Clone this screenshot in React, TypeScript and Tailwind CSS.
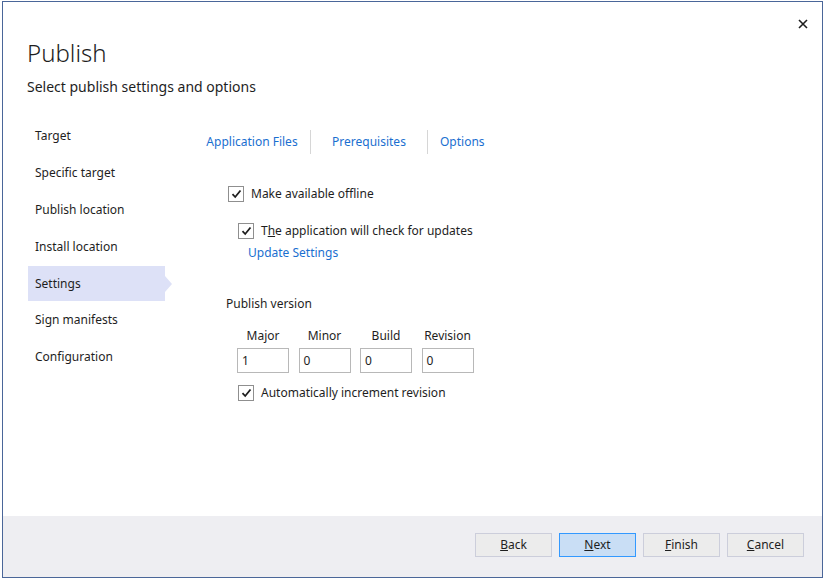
import React from 'react';

const navItems = [
  'Target',
  'Specific target',
  'Publish location',
  'Install location',
  'Settings',
  'Sign manifests',
  'Configuration',
];

const versionParts = [
  { label: 'Major', value: '1' },
  { label: 'Minor', value: '0' },
  { label: 'Build', value: '0' },
  { label: 'Revision', value: '0' },
];

const CheckBox: React.FC = () => (
  <span className="flex h-[16px] w-[16px] shrink-0 items-center justify-center border border-[#8f8f8f] bg-white">
    <svg width="11" height="10" viewBox="0 0 11 10">
      <path d="M1.5 5.2 L4.2 8 L9.5 1.5" fill="none" stroke="#1e1e1e" strokeWidth="1.8" />
    </svg>
  </span>
);

const DialogButton: React.FC<{ accel: string; rest: string; primary?: boolean }> = ({ accel, rest, primary }) => (
  <button
    className={`h-[24px] w-[77px] border text-[12px] text-[#1e1e1e] ${
      primary ? 'border-[#3399ff] bg-[#c9def5]' : 'border-[#cccedb] bg-[#ececec]'
    }`}
  >
    <u>{accel}</u>
    {rest}
  </button>
);

export default function App() {
  return (
    <div className="h-[581px] w-[826px] bg-white pl-[2px] pt-[1px] font-['Noto_Sans',sans-serif] text-[#1e1e1e]">
      <div className="relative flex h-[577px] w-[821px] flex-col border border-[#4a6699]">
        {/* close */}
        <button className="absolute right-[13px] top-[16px] flex h-[12px] w-[12px] items-center justify-center">
          <svg width="10" height="10" viewBox="0 0 10 10">
            <path d="M1 1 L9 9 M9 1 L1 9" stroke="#1e1e1e" strokeWidth="1.6" />
          </svg>
        </button>

        <div className="flex-1">
          <div className="pl-[24px] pt-[35px]">
            <h1 className="h-[32px] text-[24px] leading-[32px] font-light">Publish</h1>
            <p className="mt-[8px] h-[20px] text-[14px] leading-[20px]">Select publish settings and options</p>
          </div>

          <div className="mt-[21px] flex">
            {/* sidebar */}
            <ul className="ml-[25px] w-[144px]">
              {navItems.map((item) => {
                const active = item === 'Settings';
                return (
                  <li key={item} className="relative flex h-[36.8px] items-center">
                    <div
                      className={`flex h-[35px] w-[137px] items-center pl-[7px] text-[12px] ${
                        active ? 'bg-[#dde1f7]' : ''
                      }`}
                    >
                      {item}
                    </div>
                    {active && (
                      <span className="h-0 w-0 border-y-[8px] border-l-[7px] border-y-transparent border-l-[#dde1f7]" />
                    )}
                  </li>
                );
              })}
            </ul>

            {/* content */}
            <div className="ml-[22px] flex flex-col">
              <div className="mt-[12px] flex h-[24px] items-center text-[12px] text-[#1a6fd0]">
                <span className="w-[116px] text-center">Application Files</span>
                <span className="h-[24px] w-px bg-[#d6d6d6]" />
                <span className="w-[116px] text-center">Prerequisites</span>
                <span className="h-[24px] w-px bg-[#d6d6d6]" />
                <span className="px-[12px]">Options</span>
              </div>

              <label className="ml-[34px] mt-[31px] flex h-[18px] items-center gap-[7px] text-[12px]">
                <CheckBox />
                Make available offline
              </label>

              <label className="ml-[44px] mt-[19px] flex h-[18px] items-center gap-[7px] text-[12px]">
                <CheckBox />
                <span>
                  T<u>h</u>e application will check for updates
                </span>
              </label>

              <span className="ml-[54px] mt-[4px] h-[18px] text-[12px] leading-[18px] text-[#1a6fd0]">
                Update Settings
              </span>

              <span className="ml-[32px] mt-[33px] h-[18px] text-[12px] leading-[18px]">Publish version</span>

              <div className="ml-[43px] mt-[14px] flex gap-[9.5px]">
                {versionParts.map((p) => (
                  <div key={p.label} className="flex w-[52px] flex-col">
                    <span className="h-[18px] text-center text-[12px] leading-[18px]">{p.label}</span>
                    <div className="mt-[3px] flex h-[25px] items-center border border-[#b8b8b8] bg-white pl-[4px] text-[12px]">
                      {p.value}
                    </div>
                  </div>
                ))}
              </div>

              <label className="ml-[44px] mt-[11px] flex h-[18px] items-center gap-[7px] text-[12px]">
                <CheckBox />
                Automatically increment revision
              </label>
            </div>
          </div>
        </div>

        {/* footer */}
        <div className="flex h-[61px] items-start justify-end gap-[7px] bg-[#eeeef2] pr-[18px] pt-[17px]">
          <DialogButton accel="B" rest="ack" />
          <DialogButton accel="N" rest="ext" primary />
          <DialogButton accel="F" rest="inish" />
          <DialogButton accel="C" rest="ancel" />
        </div>
      </div>
    </div>
  );
}
